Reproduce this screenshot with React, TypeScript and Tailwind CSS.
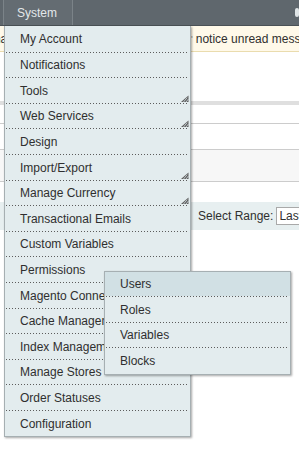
import { ReactNode } from 'react';

const menu = [
  { label: 'My Account', h: 'h-[26px]' },
  { label: 'Notifications', h: 'h-[24px]' },
  { label: 'Tools', h: 'h-[25px]', sub: true },
  { label: 'Web Services', h: 'h-[24px]', sub: true },
  { label: 'Design', h: 'h-[25px]' },
  { label: 'Import/Export', h: 'h-[25px]', sub: true },
  { label: 'Manage Currency', h: 'h-[24px]', sub: true },
  { label: 'Transactional Emails', h: 'h-[25px]' },
  { label: 'Custom Variables', h: 'h-[24px]' },
  { label: 'Permissions', h: 'h-[25px]' },
  { label: 'Magento Connect Manager', h: 'h-[25px]' },
  { label: 'Cache Management', h: 'h-[24px]' },
  { label: 'Index Management', h: 'h-[25px]' },
  { label: 'Manage Stores', h: 'h-[24px]' },
  { label: 'Order Statuses', h: 'h-[25px]' },
  { label: 'Configuration', h: 'h-[25px]' },
];

const submenu = [
  { label: 'Users', h: 'h-[24px]', active: true },
  { label: 'Roles', h: 'h-[25px]' },
  { label: 'Variables', h: 'h-[24px]' },
  { label: 'Blocks', h: 'h-[26px]' },
];

function Dots() {
  return <div className="h-px shrink-0 mx-px bg-[repeating-linear-gradient(to_right,#5c5c5c_0_1px,transparent_1px_3px)]" />;
}

function SubArrow() {
  return (
    <svg width="9" height="7" viewBox="0 0 9 7" className="self-end mb-[1px] mr-[1px] shrink-0">
      <path d="M8.5 0.5 L8.5 7 L1 7 Z" fill="#5e5e5e" />
      <path d="M3.5 7 L7.2 2.6 M6 7 L8.5 4" stroke="#c9d3d6" strokeWidth="0.9" />
    </svg>
  );
}

function Item({ h, children, sub, active }: { h: string; children: ReactNode; sub?: boolean; active?: boolean }) {
  return (
    <div className={`${h} flex items-center justify-between pl-[15px] whitespace-nowrap overflow-hidden ${active ? 'bg-[#d1e0e4]' : ''}`}>
      <span>{children}</span>
      {sub && <SubArrow />}
    </div>
  );
}

export default function App() {
  return (
    <div className="relative w-[299px] h-[461px] overflow-hidden bg-white text-[12px] text-[#2f2f2f] font-['Liberation_Sans',Arial,sans-serif]">
      {/* header nav */}
      <div className="h-[26px] flex items-stretch bg-[#5f676d] border-b border-[#4a5156]">
        <div className="w-[3px]" />
        <div className="w-px bg-[#7b8388]" />
        <div className="w-[68px] flex items-center pl-[13px] text-[#e3e8ea] bg-[#646c72]">System</div>
        <div className="w-px bg-[#7b8388]" />
        <div className="flex-1" />
        <div className="w-[4px] flex items-center">
          <div className="w-[8px] h-[9px] rounded-full border-2 border-[#dfe4e6]" />
        </div>
      </div>

      {/* page behind the menu */}
      <div className="h-[26px] flex items-center bg-[#fff9e9] border-b border-[#eadcae] whitespace-nowrap">
        <div className="w-[190px] flex justify-end overflow-hidden shrink-0">
          <span>You have 1 critical, 9 major, 34 minor and</span>
        </div>
        <span className="text-[#8a8a8a] pl-px leading-none self-start mt-[9px] text-[9px]">'</span>
        <span className="pl-[3px]">notice unread message(s).</span>
      </div>
      <div className="h-[49px]" />
      <div className="h-[4px] bg-[#dfdfdf]" />
      <div className="h-[18px]" />
      <div className="h-px bg-[#cccccc]" />
      <div className="h-[25px]" />
      <div className="h-[33px] bg-[#f7f7f7] border-y border-[#cccccc]" />
      <div className="h-[20px]" />
      <div className="h-[28px] bg-[#e7eff0] flex items-center pl-[198px] whitespace-nowrap">
        <span>Select Range:</span>
        <div className="ml-[3px] h-[18px] w-[80px] shrink-0 border border-[#a9a9a9] bg-white flex items-center pl-[2px]">Last 24 Hours</div>
      </div>

      {/* System dropdown */}
      <div className="absolute top-[26px] left-[4px] w-[187px] bg-[#e3ecee] border-x border-b border-[#a6afb2] shadow-[1px_1px_2px_rgba(0,0,0,0.35)]">
        <div className="flex flex-col">
          {menu.map((m, i) => (
            <div key={m.label} className="flex flex-col">
              <Item h={m.h} sub={m.sub}>{m.label}</Item>
              {i < menu.length - 1 && <Dots />}
            </div>
          ))}
        </div>

        {/* Permissions flyout */}
        <div className="absolute top-[245px] left-[99px] w-[187px] bg-[#e3ecee] border border-[#a6afb2] shadow-[1px_1px_2px_rgba(0,0,0,0.35)] flex flex-col">
          {submenu.map((s, i) => (
            <div key={s.label} className="flex flex-col">
              <Item h={s.h} active={s.active}>{s.label}</Item>
              {i < submenu.length - 1 && <Dots />}
            </div>
          ))}
        </div>
      </div>
    </div>
  );
}
